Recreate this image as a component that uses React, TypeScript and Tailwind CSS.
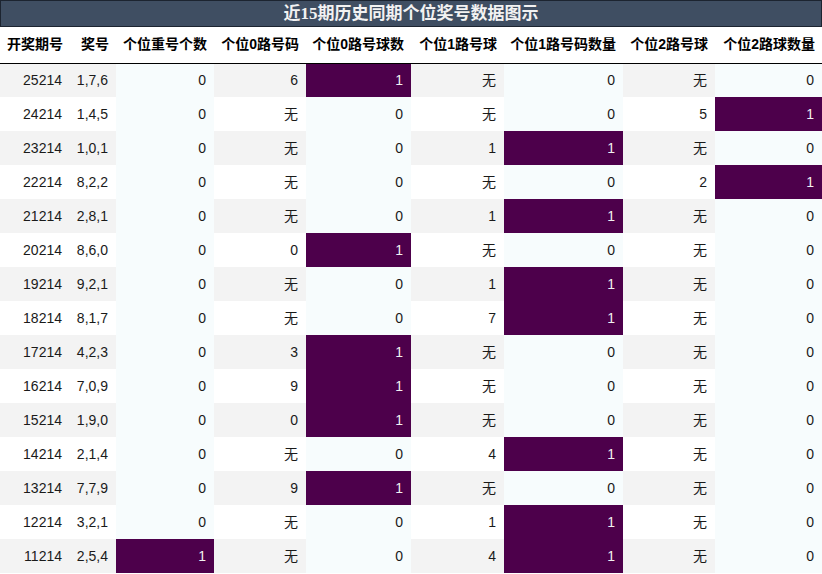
import React from "react";

type Row = [string, string, number, string, number, string, number, string, number];

const rows: Row[] = [
  ["25214", "1,7,6", 0, "6", 1, "无", 0, "无", 0],
  ["24214", "1,4,5", 0, "无", 0, "无", 0, "5", 1],
  ["23214", "1,0,1", 0, "无", 0, "1", 1, "无", 0],
  ["22214", "8,2,2", 0, "无", 0, "无", 0, "2", 1],
  ["21214", "2,8,1", 0, "无", 0, "1", 1, "无", 0],
  ["20214", "8,6,0", 0, "0", 1, "无", 0, "无", 0],
  ["19214", "9,2,1", 0, "无", 0, "1", 1, "无", 0],
  ["18214", "8,1,7", 0, "无", 0, "7", 1, "无", 0],
  ["17214", "4,2,3", 0, "3", 1, "无", 0, "无", 0],
  ["16214", "7,0,9", 0, "9", 1, "无", 0, "无", 0],
  ["15214", "1,9,0", 0, "0", 1, "无", 0, "无", 0],
  ["14214", "2,1,4", 0, "无", 0, "4", 1, "无", 0],
  ["13214", "7,7,9", 0, "9", 1, "无", 0, "无", 0],
  ["12214", "3,2,1", 0, "无", 0, "1", 1, "无", 0],
  ["11214", "2,5,4", 1, "无", 0, "4", 1, "无", 0],
];

const headers = [
  "开奖期号",
  "奖号",
  "个位重号个数",
  "个位0路号码",
  "个位0路号球数",
  "个位1路号球",
  "个位1路号码数量",
  "个位2路号球",
  "个位2路球数量",
];

const widths = ["w-[70px]", "w-[46px]", "w-[98px]", "w-[92px]", "w-[105px]", "w-[93px]", "w-[119px]", "w-[92px]", "w-[107px]"];

export default function App() {
  return (
    <div className="w-[822px] h-[574px] overflow-hidden bg-white" style={{ fontFamily: '"Liberation Sans", "Noto Sans CJK SC", sans-serif' }}>
      <div
        className="h-[27px] border border-[#1c2430] bg-[#3f4e62] text-[#f2f2f2] text-[17px] font-bold flex items-center justify-center leading-none"
        style={{ fontFamily: '"Liberation Serif", "Noto Sans CJK SC", serif' }}
      >
        近15期历史同期个位奖号数据图示
      </div>
      <table className="table-fixed border-collapse w-[822px]">
        <colgroup>
          {widths.map((w, i) => (
            <col key={i} className={w} />
          ))}
        </colgroup>
        <thead>
          <tr className="h-[36px] border-b border-black">
            {headers.map((h, i) => (
              <th key={i} className="text-right pr-[7px] pl-0 text-[14px] font-bold text-black whitespace-nowrap p-0">
                {h}
              </th>
            ))}
          </tr>
        </thead>
        <tbody>
          {rows.map((r, ri) => {
            const stripe = ri % 2 === 0 ? "bg-[#f3f3f3]" : "bg-white";
            return (
              <tr key={ri} className="h-[34px]">
                {r.map((v, ci) => {
                  const grad = ci === 2 || ci === 4 || ci === 6 || ci === 8;
                  let cls = "text-right pr-[8px] text-[14px] p-0 whitespace-nowrap ";
                  if (grad) {
                    cls += v === 1 ? "bg-[#4d004b] text-[#f1f1f1]" : "bg-[#f7fcfd] text-[#1a1a1a]";
                  } else {
                    cls += stripe + " text-[#1a1a1a]";
                  }
                  return (
                    <td key={ci} className={cls}>
                      {String(v)}
                    </td>
                  );
                })}
              </tr>
            );
          })}
        </tbody>
      </table>
    </div>
  );
}
